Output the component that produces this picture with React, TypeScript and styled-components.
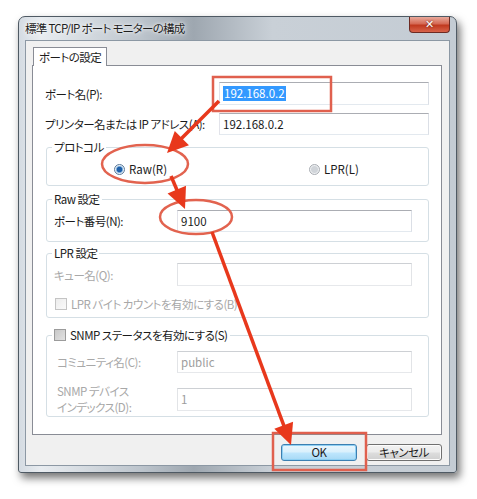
import React from 'react'
import styled, { createGlobalStyle } from 'styled-components'

const GlobalStyle = createGlobalStyle`
  body {
    margin: 0;
    background: #fff;
    font-family: "Noto Sans CJK JP", "Liberation Sans", sans-serif;
    font-size: 11.5px;
    font-feature-settings: "palt";
    letter-spacing: -0.5px;
    color: #1b1b1b;
  }
`

const Page = styled.div`
  position: relative;
  width: 477px;
  height: 499px;
  padding: 16px 0 0 18px;
  box-sizing: border-box;
  overflow: hidden;
`

const Window = styled.div`
  width: 439px;
  height: 457px;
  box-sizing: border-box;
  border: 1px solid #4f5a64;
  border-radius: 7px 7px 3px 3px;
  background: linear-gradient(90deg, #d4dbe2 0%, #e8ecf0 5%, #bcc4cc 28%, #9ea7b0 40%, #c9d0d7 58%, #c4ccd4 100%);
  box-shadow: 3px 5px 8px rgba(0, 0, 0, 0.55);
  padding: 0 6px 6px 6px;
  display: flex;
  flex-direction: column;
`

const TitleBar = styled.div`
  height: 23px;
  display: flex;
  align-items: flex-start;
  flex-shrink: 0;
`

const Title = styled.div`
  line-height: 22px;
  font-size: 11.5px;
  letter-spacing: -0.7px;
  color: #1e1e1e;
  text-shadow: 0 0 6px rgba(255, 255, 255, 0.9), 0 0 3px rgba(255, 255, 255, 0.9);
`

const CloseButton = styled.div`
  margin-left: auto;
  width: 41px;
  height: 16px;
  box-sizing: border-box;
  border: 1px solid #6d2a22;
  border-top: none;
  border-radius: 0 0 4px 4px;
  background: linear-gradient(180deg, #e9a99b 0%, #d56a55 45%, #c0391f 55%, #d8634a 100%);
  display: flex;
  align-items: center;
  justify-content: center;
  color: #fff;
  font-family: "DejaVu Sans", sans-serif;
  font-weight: bold;
  font-size: 11px;
  letter-spacing: 0;
  text-shadow: 0 0 2px #5a1a10;
`

const Client = styled.div`
  flex: 1;
  border: 1px solid #8c98a4;
  background: #f0f0f0;
  padding: 6px 7px 0 6px;
  display: flex;
  flex-direction: column;
`

const TabStrip = styled.div`
  display: flex;
  height: 19px;
  margin-bottom: -1px;
  position: relative;
  z-index: 1;
`

const Tab = styled.div`
  margin-left: 1px;
  padding: 0 5px;
  border: 1px solid #898c95;
  border-bottom: none;
  background: #fff;
  line-height: 19px;
`

const TabPanel = styled.div`
  height: 370px;
  box-sizing: border-box;
  border: 1px solid #898c95;
  background: #fff;
  padding: 16px 12px 0 12px;
  display: flex;
  flex-direction: column;
`

const TopRow = styled.div<{ $gap?: number; $h: number }>`
  display: grid;
  grid-template-columns: 174px 210px;
  align-items: center;
  height: ${p => p.$h}px;
  margin-top: ${p => p.$gap ?? 0}px;
`

const Label = styled.div<{ $disabled?: boolean; $indent?: number; $top?: boolean }>`
  color: ${p => (p.$disabled ? '#a8a8a8' : '#1b1b1b')};
  padding-left: ${p => p.$indent ?? 0}px;
  line-height: 16px;
  white-space: nowrap;
  align-self: ${p => (p.$top ? 'start' : 'center')};
`

const TextBox = styled.div<{ $h: number; $disabled?: boolean }>`
  height: ${p => p.$h}px;
  box-sizing: border-box;
  border: 1px solid;
  border-color: ${p => (p.$disabled ? '#cdd0d4 #e2e4e7 #e6e8eb #e2e4e7' : '#abadb3 #dbdfe6 #e3e9ef #e2e3ea')};
  background: #fff;
  padding-left: 3px;
  display: flex;
  align-items: center;
  color: ${p => (p.$disabled ? '#9d9d9d' : '#1b1b1b')};
  letter-spacing: 0;
`

const Selected = styled.span`
  background: #3399ff;
  color: #fff;
  line-height: 15px;
  padding: 0 1px;
`

const Group = styled.div<{ $gap: number; $h: number }>`
  margin: ${p => p.$gap}px 0 0 1px;
  height: ${p => p.$h}px;
  box-sizing: border-box;
  border: 1px solid #d5dfe5;
  border-radius: 3px;
  display: flex;
  flex-direction: column;
`

const Legend = styled.div`
  width: fit-content;
  margin: -8px 0 0 5px;
  padding: 0 2px;
  background: #fff;
  line-height: 14px;
  display: flex;
  align-items: center;
  gap: 4px;
`

const Options = styled.div`
  display: grid;
  grid-template-columns: 195px auto;
  height: 22px;
  margin-top: 4px;
  padding-left: 67px;
  align-items: center;
`

const Option = styled.div`
  display: flex;
  align-items: center;
  gap: 4px;
  letter-spacing: 0;
`

const Radio = styled.span<{ $checked?: boolean }>`
  width: 11px;
  height: 11px;
  box-sizing: border-box;
  border-radius: 50%;
  border: 1px solid ${p => (p.$checked ? '#5a7a9a' : '#a8acb2')};
  background: ${p =>
    p.$checked
      ? 'radial-gradient(circle, #1f5fa8 0 2.5px, #6fa6da 3px, #e8eef4 4px)'
      : 'radial-gradient(circle, #d0d4d9 0 3px, #eef0f2 4px)'};
`

const Check = styled.span<{ $filled?: boolean }>`
  width: 12px;
  height: 12px;
  box-sizing: border-box;
  border: 1px solid ${p => (p.$filled ? '#9b9b9b' : '#c4c4c4')};
  background: ${p => (p.$filled ? 'linear-gradient(135deg, #c8c8c8, #e2e2e2)' : 'linear-gradient(135deg, #ececec, #fafafa)')};
`

const FieldRow = styled.div<{ $gap: number; $h: number }>`
  display: grid;
  grid-template-columns: 123px 235px;
  align-items: center;
  height: ${p => p.$h}px;
  margin-top: ${p => p.$gap}px;
  padding-left: 7px;
`

const CheckRow = styled.div`
  display: flex;
  align-items: center;
  gap: 4px;
  margin-top: 10px;
  padding-left: 8px;
  height: 16px;
  color: #a8a8a8;
`

const ButtonRow = styled.div`
  display: flex;
  justify-content: flex-end;
  gap: 9px;
  margin-top: 9px;
`

const Button = styled.div<{ $primary?: boolean }>`
  width: 76px;
  height: 17px;
  box-sizing: border-box;
  border: 1px solid ${p => (p.$primary ? '#3c7fb1' : '#707070')};
  border-radius: 3px;
  background: ${p =>
    p.$primary
      ? 'linear-gradient(180deg, #eaf6fd 0%, #d9f0fc 48%, #bee6fd 52%, #a7d9f5 100%)'
      : 'linear-gradient(180deg, #f2f2f2 0%, #ebebeb 48%, #dddddd 52%, #cfcfcf 100%)'};
  box-shadow: ${p => (p.$primary ? 'inset 0 0 0 1px #8fd0f3' : 'inset 0 0 0 1px #fcfcfc')};
  display: flex;
  align-items: center;
  justify-content: center;
  line-height: 15px;
`

const Overlay = styled.svg`
  position: absolute;
  left: 0;
  top: 0;
  pointer-events: none;
`

type Pt = [number, number]

const Arrow = ({ from, to }: { from: Pt; to: Pt }) => {
  const dx = to[0] - from[0]
  const dy = to[1] - from[1]
  const len = Math.hypot(dx, dy)
  const ux = dx / len
  const uy = dy / len
  const head = 21
  const half = 10
  const bx = to[0] - ux * head
  const by = to[1] - uy * head
  const pts = [
    to,
    [bx - uy * half, by + ux * half],
    [bx + uy * half, by - ux * half],
  ]
    .map(p => p.join(','))
    .join(' ')
  return (
    <g>
      <line x1={from[0]} y1={from[1]} x2={bx + ux * 2} y2={by + uy * 2} stroke="#e8381c" strokeWidth={3.5} />
      <polygon points={pts} fill="#e8381c" />
    </g>
  )
}

const Annotations = () => (
  <Overlay width={477} height={499} viewBox="0 0 477 499">
    <rect x={213} y={77} width={118} height={34} fill="none" stroke="#e0604e" strokeWidth={2.5} />
    <rect x={273} y={433} width={93} height={37} fill="none" stroke="#e0604e" strokeWidth={2.5} />
    <ellipse cx={145} cy={164} rx={43} ry={19} fill="none" stroke="#e2634f" strokeWidth={2.5} />
    <ellipse cx={196} cy={217} rx={36} ry={17} fill="none" stroke="#e2634f" strokeWidth={2.5} />
    <Arrow from={[219, 101]} to={[167, 153]} />
    <Arrow from={[171, 176]} to={[185, 209]} />
    <Arrow from={[212, 232]} to={[291, 445]} />
  </Overlay>
)

const App = () => {
  return (
    <Page>
      <GlobalStyle />
      <Window>
        <TitleBar>
          <Title>標準 TCP/IP ポート モニターの構成</Title>
          <CloseButton>✕</CloseButton>
        </TitleBar>
        <Client>
          <TabStrip>
            <Tab>ポートの設定</Tab>
          </TabStrip>
          <TabPanel>
            <TopRow $h={23}>
              <Label>ポート名(P):</Label>
              <TextBox $h={23}>
                <Selected>192.168.0.2</Selected>
              </TextBox>
            </TopRow>
            <TopRow $h={22} $gap={8}>
              <Label>プリンター名または IP アドレス(A):</Label>
              <TextBox $h={22}>192.168.0.2</TextBox>
            </TopRow>

            <Group $gap={12} $h={39}>
              <Legend>プロトコル</Legend>
              <Options>
                <Option>
                  <Radio $checked />
                  Raw(R)
                </Option>
                <Option>
                  <Radio />
                  LPR(L)
                </Option>
              </Options>
            </Group>

            <Group $gap={13} $h={43}>
              <Legend>Raw 設定</Legend>
              <FieldRow $gap={4} $h={22}>
                <Label>ポート番号(N):</Label>
                <TextBox $h={22}>9100</TextBox>
              </FieldRow>
            </Group>

            <Group $gap={11} $h={65}>
              <Legend>LPR 設定</Legend>
              <FieldRow $gap={3} $h={23}>
                <Label $disabled>キュー名(Q):</Label>
                <TextBox $h={23} $disabled />
              </FieldRow>
              <CheckRow>
                <Check />
                LPR バイト カウントを有効にする(B)
              </CheckRow>
            </Group>

            <Group $gap={17} $h={82}>
              <Legend>
                <Check $filled />
                SNMP ステータスを有効にする(S)
              </Legend>
              <FieldRow $gap={9} $h={22}>
                <Label $disabled $indent={3}>コミュニティ名(C):</Label>
                <TextBox $h={22} $disabled>public</TextBox>
              </FieldRow>
              <FieldRow $gap={10} $h={23}>
                <Label $disabled $indent={3} $top>
                  SNMP デバイス
                  <br />
                  インデックス(D):
                </Label>
                <TextBox $h={23} $disabled>1</TextBox>
              </FieldRow>
            </Group>
          </TabPanel>
          <ButtonRow>
            <Button $primary>OK</Button>
            <Button>キャンセル</Button>
          </ButtonRow>
        </Client>
      </Window>
      <Annotations />
    </Page>
  )
}

export default App
